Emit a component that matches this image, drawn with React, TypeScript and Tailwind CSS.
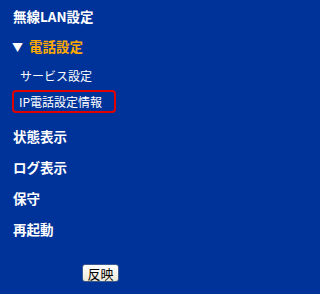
const font = {
  fontFamily: '"Noto Sans CJK JP", "DejaVu Sans", sans-serif',
};

const TopItem = ({ label, h, className = "" }: { label: string; h: string; className?: string }) => (
  <div className={`flex items-center pl-[13px] text-[13.5px] font-bold leading-none text-white ${h} ${className}`}>
    {label}
  </div>
);

export default function App() {
  return (
    <main className="flex h-[294px] w-full min-w-[222px] flex-col bg-[#003399] pt-[2px]" style={font}>
      <TopItem label="無線LAN設定" h="h-[30px]" />

      <div className="flex h-[30px] items-center pl-[12px] text-[13.5px] font-bold leading-none">
        <span className="text-[11px] text-white">▼</span>
        <span className="ml-[6px] text-[#ffaa00]">電話設定</span>
      </div>

      <div className="flex h-[28px] items-center pl-[20px] text-[12px] leading-none text-white">
        サービス設定
      </div>

      <div className="ml-[12px] flex h-[23px] w-[104px] items-center rounded-[4px] border-2 border-[#e00000] pl-[5px] text-[12px] leading-none text-white">
        IP電話設定情報
      </div>

      <TopItem label="状態表示" h="h-[30px]" className="mt-[9px]" />
      <TopItem label="ログ表示" h="h-[31px]" className="pl-[11px]" />
      <TopItem label="保守" h="h-[32px]" />
      <TopItem label="再起動" h="h-[30px]" />

      <div className="mt-[19px] flex pl-[82px]">
        <button className="flex h-[18px] w-[37px] items-center justify-center rounded-[3px] border border-[#3c5a8e] bg-gradient-to-b from-white to-[#ece9d8] text-[13px] leading-none text-black">
          反映
        </button>
      </div>
    </main>
  );
}
